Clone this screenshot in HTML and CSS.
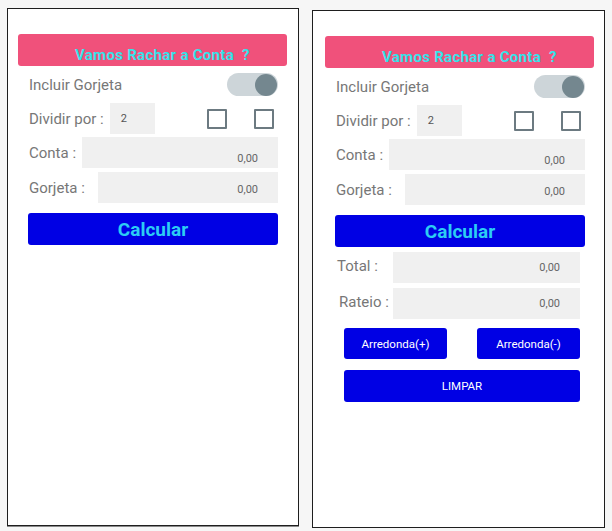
FILE: index.html
```html
<!DOCTYPE html>
<html lang="pt">
<head>
    <meta charset="UTF-8">
    <title>Vamos Rachar a Conta</title>
    <link rel="stylesheet" href="styles.css">
</head>
<body>

    <!-- tela inicial -->
    <div class="screen">
        <div class="title-bar">Vamos Rachar a Conta&nbsp; ?</div>
        <div class="form">
            <div class="row row-toggle">
                <span class="label">Incluir Gorjeta</span>
                <span class="switch"><span class="knob"></span></span>
            </div>
            <div class="row row-split">
                <span class="label">Dividir por :</span>
                <span class="small-input">2</span>
                <span class="check first"></span>
                <span class="check"></span>
            </div>
            <div class="row row-field">
                <span class="label w-conta">Conta :</span>
                <span class="field">0,00</span>
            </div>
            <div class="row row-field">
                <span class="label w-gorjeta">Gorjeta :</span>
                <span class="field field-mid">0,00</span>
            </div>
            <button class="btn-calc">Calcular</button>
        </div>
    </div>

    <!-- tela com resultado -->
    <div class="screen screen-result">
        <div class="title-bar">Vamos Rachar a Conta&nbsp; ?</div>
        <div class="form">
            <div class="row row-toggle">
                <span class="label">Incluir Gorjeta</span>
                <span class="switch"><span class="knob"></span></span>
            </div>
            <div class="row row-split">
                <span class="label">Dividir por :</span>
                <span class="small-input">2</span>
                <span class="check first"></span>
                <span class="check"></span>
            </div>
            <div class="row row-field">
                <span class="label w-conta">Conta :</span>
                <span class="field">0,00</span>
            </div>
            <div class="row row-field">
                <span class="label w-gorjeta">Gorjeta :</span>
                <span class="field field-mid">0,00</span>
            </div>
            <button class="btn-calc">Calcular</button>

            <div class="results">
                <div class="row row-result">
                    <span class="label w-total">Total :</span>
                    <span class="field">0,00</span>
                </div>
                <div class="row row-result">
                    <span class="label w-total rateio">Rateio :</span>
                    <span class="field">0,00</span>
                </div>
                <div class="round-buttons">
                    <button class="btn-small">Arredonda(+)</button>
                    <button class="btn-small">Arredonda(-)</button>
                </div>
                <button class="btn-clear">LIMPAR</button>
            </div>
        </div>
    </div>

</body>
</html>
```

FILE: styles.css
```css
/* base */
body {
    margin: 0;
    padding: 8px 0 0 7px;
    background-color: #f6f6f6;
    font-family: Roboto, "Liberation Sans", Arial, sans-serif;
    display: flex;
    align-items: flex-start;
    gap: 13px;
}

/* telas */
.screen {
    width: 292px;
    height: 518px;
    border: 1px solid #1e1e1e;
    background-color: #ffffff;
    box-shadow: 0 1px 0 #8a8a8a;
    padding: 25px 0 0 10px;
    box-sizing: border-box;
}

.screen-result {
    margin-top: 2px;
    padding-left: 12px;
    width: 293px;
}

.title-bar {
    width: 269px;
    height: 32px;
    box-sizing: border-box;
    background-color: #f0517b;
    border-radius: 3px;
    color: #36e2ea;
    font-weight: bold;
    font-size: 15px;
    letter-spacing: 0.3px;
    padding: 13px 0 0 57px;
    line-height: 16px;
    white-space: nowrap;
}

.form {
    width: 250px;
    margin-left: 10px;
}

.row {
    display: flex;
    align-items: center;
}

.label {
    color: #777;
    font-size: 15px;
    padding-left: 1px;
}

/* gorjeta toggle */
.row-toggle {
    margin-top: 7px;
    height: 23px;
    justify-content: space-between;
}

.switch {
    width: 51px;
    height: 23px;
    border-radius: 12px;
    background-color: #cdd5d9;
    display: flex;
    justify-content: flex-end;
    align-items: center;
    padding-right: 1px;
    box-sizing: border-box;
}

.knob {
    width: 22px;
    height: 22px;
    border-radius: 50%;
    background-color: #74878f;
}

/* dividir por */
.row-split {
    margin-top: 7px;
    height: 31px;
}

.small-input {
    width: 45px;
    height: 31px;
    margin-left: 6px;
    background-color: #f0f0f0;
    font-size: 11px;
    color: #555;
    padding-left: 11px;
    line-height: 31px;
    box-sizing: border-box;
}

.check {
    width: 20px;
    height: 20px;
    border: 2px solid #6c7a81;
    box-sizing: border-box;
    margin-left: 27px;
    border-radius: 1px;
}

.check.first {
    margin-left: 52px;
}

/* campos */
.row-field {
    margin-top: 3px;
    height: 31px;
}

.row-field + .row-field {
    margin-top: 4px;
}

.w-conta {
    width: 53px;
}

.w-gorjeta {
    width: 69px;
}

.field {
    flex: 1;
    height: 31px;
    background-color: #f0f0f0;
    font-size: 11px;
    color: #666;
    text-align: right;
    padding: 16px 20px 0 0;
    box-sizing: border-box;
    line-height: 12px;
}

.field-mid {
    padding-top: 12px;
}

.btn-calc {
    display: block;
    width: 250px;
    height: 32px;
    margin-top: 10px;
    border: none;
    border-radius: 3px;
    background-color: #0000e4;
    color: #2ccdf4;
    font-family: inherit;
    font-weight: bold;
    font-size: 19px;
    padding: 0;
}

/* resultados */
.results {
    width: 245px;
    margin-top: 5px;
}

.row-result {
    height: 31px;
}

.row-result .field {
    padding-top: 10px;
}

.row-result + .row-result {
    margin-top: 5px;
}

.w-total {
    width: 56px;
    padding-left: 2px;
    margin-top: -3px;
}

.rateio {
    padding-left: 4px;
    width: 54px;
}

.round-buttons {
    display: flex;
    justify-content: space-between;
    margin: 9px 0 0 9px;
}

.btn-small, .btn-clear {
    border: none;
    border-radius: 3px;
    background-color: #0000e4;
    color: #ffffff;
    font-family: inherit;
    font-size: 11.5px;
    padding: 0;
}

.btn-small {
    width: 103px;
    height: 31px;
}

.btn-clear {
    display: block;
    width: 236px;
    height: 32px;
    margin: 11px 0 0 9px;
}
```
